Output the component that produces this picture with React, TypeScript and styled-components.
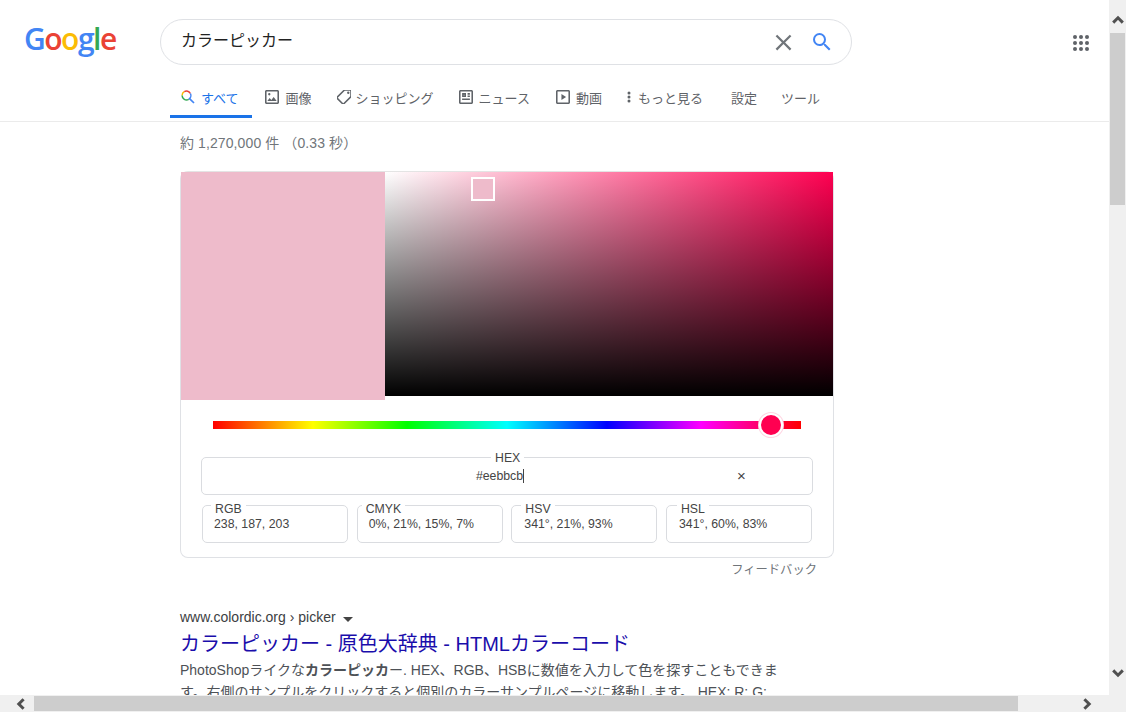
import React from 'react';
import styled, {createGlobalStyle} from 'styled-components';

const FONT = `'Liberation Sans', 'Noto Sans CJK JP', sans-serif`;

const GlobalStyle = createGlobalStyle`
    html, body {
        margin: 0;
        padding: 0;
        height: 100%;
        overflow: hidden;
        background: #fff;
    }

    #root {
        height: 100%;
    }
`;

const Frame = styled.div`
    display: grid;
    grid-template-columns: 1109px 17px;
    grid-template-rows: 695px 17px;
    width: 1126px;
    height: 712px;
    font-family: ${FONT};
    color: #3c4043;
`;

const Page = styled.main`
    overflow: hidden;
    background: #fff;
`;

const Header = styled.header`
    display: flex;
    align-items: flex-start;
    height: 65px;
    padding-top: 19px;
    box-sizing: border-box;
`;

const Logo = styled.div`
    width: 136px;
    margin-left: 24px;
    font-family: 'Open Sans', sans-serif;
    font-size: 30px;
    font-weight: 600;
    line-height: 40px;
    letter-spacing: -1.5px;
`;

const LogoLetter = styled.span<{$color: string}>`
    color: ${({$color}) => $color};
`;

const SearchBox = styled.div`
    display: flex;
    align-items: center;
    width: 692px;
    height: 46px;
    box-sizing: border-box;
    padding: 0 17px 0 20px;
    border: 1px solid #dfe1e5;
    border-radius: 23px;
`;

const SearchText = styled.div`
    flex: 1;
    margin-top: -6px;
    font-size: 16px;
    color: #222;
`;

const SearchButtons = styled.div`
    display: flex;
    align-items: center;
    gap: 13px;
`;

const Apps = styled.svg`
    margin: 16px 0 0 221px;
`;

const Tabs = styled.nav`
    display: flex;
    height: 57px;
    box-sizing: border-box;
    padding: 14px 0 0 170px;
    border-bottom: 1px solid #ebebeb;
`;

const Tab = styled.div<{$active?: boolean; $iconGap?: number; $gapRight?: number}>`
    display: flex;
    align-items: center;
    gap: ${({$iconGap}) => $iconGap ?? 6}px;
    height: 39px;
    box-sizing: border-box;
    padding: 0 ${({$active}) => ($active ? 13 : 12)}px 0 11px;
    margin-right: ${({$gapRight}) => $gapRight ?? 2}px;
    border-bottom: 3px solid ${({$active}) => ($active ? '#1a73e8' : 'transparent')};
    font-size: 13px;
    color: ${({$active}) => ($active ? '#1a73e8' : '#5f6368')};
    white-space: nowrap;
`;

const Count = styled.div`
    padding: 11px 0 0 180px;
    font-size: 14px;
    line-height: 20px;
    letter-spacing: 0.1px;
    color: #70757a;
    white-space: nowrap;
`;

const Picker = styled.section`
    width: 654px;
    height: 387px;
    box-sizing: border-box;
    margin: 18px 0 0 180px;
    border: 1px solid #dfe1e5;
    border-top-color: #e4e4e4;
    border-radius: 8px;
`;

const ColorArea = styled.div`
    display: flex;
    align-items: flex-start;
`;

const Swatch = styled.div`
    width: 204px;
    height: 228px;
    background: #eebbcb;
`;

const Saturation = styled.div`
    position: relative;
    width: 448px;
    height: 224px;
    background:
        linear-gradient(to top, #000, rgba(0, 0, 0, 0)),
        linear-gradient(to right, #fff, #ff0051);
`;

const SatPointer = styled.div`
    position: absolute;
    left: 86px;
    top: 5px;
    width: 24px;
    height: 24px;
    box-sizing: border-box;
    border: 2px solid #fff;
    background: #eebbcb;
`;

const HueBar = styled.div`
    position: relative;
    width: 588px;
    height: 8px;
    margin: 21px 0 0 32px;
    background: linear-gradient(to right, #f00, #ff0 17%, #0f0 33%, #0ff 50%, #00f 67%, #f0f 83%, #f00);
`;

const HueThumb = styled.div`
    position: absolute;
    left: 546px;
    top: -8px;
    width: 24px;
    height: 24px;
    box-sizing: border-box;
    border: 2px solid #fff;
    border-radius: 50%;
    background: #ff0051;
    box-shadow: 0 0 0 1px #ffd5e2;
`;

const Fields = styled.div`
    display: flex;
    flex-direction: column;
    padding: 28px 21px 0 20px;
`;

const Field = styled.div`
    position: relative;
    height: 38px;
    box-sizing: border-box;
    border: 1px solid #dadce0;
    border-radius: 5px;
    font-size: 12.3px;
    color: #444;
`;

const HexField = styled(Field)`
    display: flex;
    align-items: center;
    justify-content: center;
    width: 612px;
    padding-right: 14px;
`;

const FieldLabel = styled.span<{$left: number; $top: number}>`
    position: absolute;
    left: ${({$left}) => $left}px;
    top: ${({$top}) => $top}px;
    padding: 0 4px;
    background: #fff;
    line-height: 14px;
    white-space: nowrap;
`;

const HexValue = styled.span`
    margin-top: -1px;
    border-right: 1px solid #444;
    line-height: 14px;
`;

const HexClear = styled.span`
    position: absolute;
    left: 535px;
    top: 10px;
    font-size: 15px;
    line-height: 15px;
`;

const SmallRow = styled.div`
    display: flex;
    gap: 8.67px;
    margin: 10px 0 0 1px;
`;

const SmallField = styled(Field)`
    width: 146px;
`;

const SmallValue = styled.div<{$left: number}>`
    padding: 11px 0 0 ${({$left}) => $left}px;
    line-height: 14px;
    white-space: nowrap;
`;

const Feedback = styled.div`
    width: 637px;
    margin: 3px 0 0 180px;
    font-size: 12.3px;
    line-height: 18px;
    color: #70757a;
    text-align: right;
`;

const Result = styled.article`
    width: 600px;
    margin: 28px 0 0 180px;
`;

const Crumb = styled.div`
    display: flex;
    align-items: center;
    gap: 7px;
    font-size: 14px;
    line-height: 20px;
    color: #3c4043;
`;

const CrumbArrow = styled.span`
    width: 0;
    height: 0;
    margin-top: 4px;
    border-top: 5px solid #444;
    border-left: 5px solid transparent;
    border-right: 5px solid transparent;
`;

const ResultTitle = styled.h3`
    margin: 3px 0 0;
    font-size: 20px;
    font-weight: normal;
    line-height: 28px;
    color: #1a0dab;
    white-space: nowrap;
`;

const Snippet = styled.p`
    margin: 1px 0 0;
    font-size: 14px;
    line-height: 22px;
    color: #4d5156;
`;

const Track = styled.div<{$vertical?: boolean}>`
    display: flex;
    flex-direction: ${({$vertical}) => ($vertical ? 'column' : 'row')};
    align-items: center;
    background: #f0f0f0;
    overflow: hidden;
`;

const ScrollCorner = styled.div`
    background: #f0f0f0;
`;

const ArrowSlot = styled.div<{$vertical?: boolean; $size: number; $inset?: number}>`
    display: flex;
    flex: none;
    align-items: center;
    justify-content: center;
    box-sizing: border-box;
    width: ${({$vertical, $size}) => ($vertical ? '17px' : `${$size}px`)};
    height: ${({$vertical, $size}) => ($vertical ? `${$size}px` : '17px')};
    padding-top: ${({$vertical, $inset}) => ($vertical ? $inset ?? 0 : 0)}px;
    padding-left: ${({$vertical, $inset}) => ($vertical ? 0 : $inset ?? 0)}px;
`;

const ThumbV = styled.div`
    flex: none;
    width: 15px;
    height: 172px;
    background: #cdcdcd;
`;

const ThumbH = styled.div`
    flex: none;
    width: 984px;
    height: 15px;
    background: #cdcdcd;
`;

const TrackFill = styled.div`
    flex: 1;
`;

const Chevron = ({rotate}: {rotate: number}) => (
    <svg width="12" height="12" viewBox="0 0 12 12" aria-hidden="true">
        <path
            d="M1.2 8.6 L6 3.8 L10.8 8.6"
            fill="none"
            stroke="#505050"
            strokeWidth="3"
            transform={`rotate(${rotate} 6 6)`}
        />
    </svg>
);

const MiniIcon = ({children}: {children: React.ReactNode}) => (
    <svg width="14" height="14" viewBox="3 3 18 18" fill="#5f6368" aria-hidden="true">
        {children}
    </svg>
);

const tabsLeft = [
    {
        label: '画像',
        iconGap: 7,
        gapRight: 2,
        icon: (
            <path d="M19 5v14H5V5h14m0-2H5c-1.1 0-2 .9-2 2v14c0 1.1.9 2 2 2h14c1.1 0 2-.9 2-2V5c0-1.1-.9-2-2-2zm-4.86 8.86l-3 3.87L9 13.14 6 17h12l-3.86-5.14zM8.5 7a1.5 1.5 0 1 0 0 3 1.5 1.5 0 0 0 0-3z" />
        ),
    },
    {
        label: 'ショッピング',
        iconGap: 5,
        gapRight: 2,
        icon: (
            <g transform="rotate(90 12 12)">
                <path d="M21.41 11.58l-9-9C12.05 2.22 11.55 2 11 2H4c-1.1 0-2 .9-2 2v7c0 .55.22 1.05.59 1.42l9 9c.36.36.86.58 1.41.58s1.05-.22 1.41-.59l7-7c.37-.36.59-.86.59-1.41s-.23-1.06-.59-1.42zM13 20.01L4 11V4h7v-.01l9 9-7 7.02z" />
                <circle cx="6.5" cy="6.5" r="1.5" />
            </g>
        ),
    },
    {
        label: 'ニュース',
        iconGap: 6,
        gapRight: 3,
        icon: (
            <path d="M19 5v14H5V5h14m0-2H5c-1.1 0-2 .9-2 2v14c0 1.1.9 2 2 2h14c1.1 0 2-.9 2-2V5c0-1.1-.9-2-2-2zM7 7h5v5H7V7zm2 2v1h1V9H9zm5-2h3v2h-3V7zm0 3h3v2h-3v-2zM7 14h10v2H7v-2z" />
        ),
    },
    {
        label: '動画',
        iconGap: 6,
        gapRight: 2,
        icon: (
            <path d="M19 5v14H5V5h14m0-2H5c-1.1 0-2 .9-2 2v14c0 1.1.9 2 2 2h14c1.1 0 2-.9 2-2V5c0-1.1-.9-2-2-2zM10 8l6 4-6 4V8z" />
        ),
    },
];

const smallFields = [
    {label: 'RGB', labelLeft: 8, value: '238, 187, 203', valueLeft: 11},
    {label: 'CMYK', labelLeft: 4, value: '0%, 21%, 15%, 7%', valueLeft: 11},
    {label: 'HSV', labelLeft: 9, value: '341°, 21%, 93%', valueLeft: 12},
    {label: 'HSL', labelLeft: 10, value: '341°, 60%, 83%', valueLeft: 12},
];

const logoLetters = [
    ['G', '#4285f4'],
    ['o', '#ea4335'],
    ['o', '#fbbc05'],
    ['g', '#4285f4'],
    ['l', '#34a853'],
    ['e', '#ea4335'],
];

const App = () => (
    <Frame>
        <GlobalStyle />
        <Page>
            <Header>
                <Logo>
                    {logoLetters.map(([letter, color], i) => (
                        <LogoLetter key={i} $color={color}>{letter}</LogoLetter>
                    ))}
                </Logo>
                <SearchBox>
                    <SearchText>カラーピッカー</SearchText>
                    <SearchButtons>
                        <svg width="27" height="27" viewBox="0 0 24 24" fill="#70757a" aria-hidden="true">
                            <path d="M19 6.41L17.59 5 12 10.59 6.41 5 5 6.41 10.59 12 5 17.59 6.41 19 12 13.41 17.59 19 19 17.59 13.41 12z" />
                        </svg>
                        <svg width="24" height="24" viewBox="0 0 24 24" fill="#4285f4" aria-hidden="true">
                            <path d="M15.5 14h-.79l-.28-.27A6.471 6.471 0 0 0 16 9.5 6.5 6.5 0 1 0 9.5 16c1.61 0 3.09-.59 4.23-1.57l.27.28v.79l5 4.99L20.49 19l-4.99-5zm-6 0C7.01 14 5 11.99 5 9.5S7.01 5 9.5 5 14 7.01 14 9.5 11.99 14 9.5 14z" />
                        </svg>
                    </SearchButtons>
                </SearchBox>
                <Apps width="16" height="16" viewBox="0 0 16 16" fill="#5f6368" aria-hidden="true">
                    {[2, 8, 14].flatMap(y => [2, 8, 14].map(x => (
                        <circle key={`${x}-${y}`} cx={x} cy={y} r="2" />
                    )))}
                </Apps>
            </Header>
            <Tabs>
                <Tab $active $gapRight={2}>
                    <svg width="14" height="14" viewBox="0 0 14 14" fill="none" strokeWidth="1.5" aria-hidden="true">
                        <path d="M1.1 5.5A4.4 4.4 0 0 1 3.3 1.7" stroke="#fbbc05" />
                        <path d="M3.3 1.7A4.4 4.4 0 0 1 9.4 3.5" stroke="#ea4335" />
                        <path d="M9.4 3.5A4.4 4.4 0 0 1 7.7 9.3" stroke="#4285f4" />
                        <path d="M7.7 9.3A4.4 4.4 0 0 1 1.1 5.5" stroke="#34a853" />
                        <path d="M8.8 8.8L13 13" stroke="#4285f4" strokeWidth="1.7" />
                    </svg>
                    すべて
                </Tab>
                {tabsLeft.map(tab => (
                    <Tab key={tab.label} $iconGap={tab.iconGap} $gapRight={tab.gapRight}>
                        <MiniIcon>{tab.icon}</MiniIcon>
                        {tab.label}
                    </Tab>
                ))}
                <Tab $iconGap={7} $gapRight={5}>
                    <svg width="4" height="14" viewBox="0 0 4 14" fill="#5f6368" aria-hidden="true">
                        <circle cx="2" cy="3" r="1.5" />
                        <circle cx="2" cy="7" r="1.5" />
                        <circle cx="2" cy="11" r="1.5" />
                    </svg>
                    もっと見る
                </Tab>
                <Tab $gapRight={1}>設定</Tab>
                <Tab>ツール</Tab>
            </Tabs>
            <Count>約 1,270,000 件 （0.33 秒）</Count>
            <Picker>
                <ColorArea>
                    <Swatch />
                    <Saturation>
                        <SatPointer />
                    </Saturation>
                </ColorArea>
                <HueBar>
                    <HueThumb />
                </HueBar>
                <Fields>
                    <HexField>
                        <FieldLabel $left={289} $top={-7}>HEX</FieldLabel>
                        <HexValue>#eebbcb</HexValue>
                        <HexClear>×</HexClear>
                    </HexField>
                    <SmallRow>
                        {smallFields.map(field => (
                            <SmallField key={field.label}>
                                <FieldLabel $left={field.labelLeft} $top={-4}>{field.label}</FieldLabel>
                                <SmallValue $left={field.valueLeft}>{field.value}</SmallValue>
                            </SmallField>
                        ))}
                    </SmallRow>
                </Fields>
            </Picker>
            <Feedback>フィードバック</Feedback>
            <Result>
                <Crumb>
                    www.colordic.org › picker
                    <CrumbArrow />
                </Crumb>
                <ResultTitle>カラーピッカー - 原色大辞典 - HTMLカラーコード</ResultTitle>
                <Snippet>
                    PhotoShopライクな<b>カラーピッカ</b>ー. HEX、RGB、HSBに数値を入力して色を探すこともできます。右側のサンプルをクリックすると個別のカラーサンプルページに移動します。 HEX: R: G:
                </Snippet>
            </Result>
        </Page>
        <Track $vertical>
            <ArrowSlot $vertical $size={33} $inset={7}><Chevron rotate={0} /></ArrowSlot>
            <ThumbV />
            <TrackFill />
            <ArrowSlot $vertical $size={44}><Chevron rotate={180} /></ArrowSlot>
        </Track>
        <Track>
            <ArrowSlot $size={34} $inset={8}>
                <Chevron rotate={-90} />
            </ArrowSlot>
            <ThumbH />
            <TrackFill />
            <ArrowSlot $size={44}>
                <Chevron rotate={90} />
            </ArrowSlot>
        </Track>
        <ScrollCorner />
    </Frame>
);

export default App;
